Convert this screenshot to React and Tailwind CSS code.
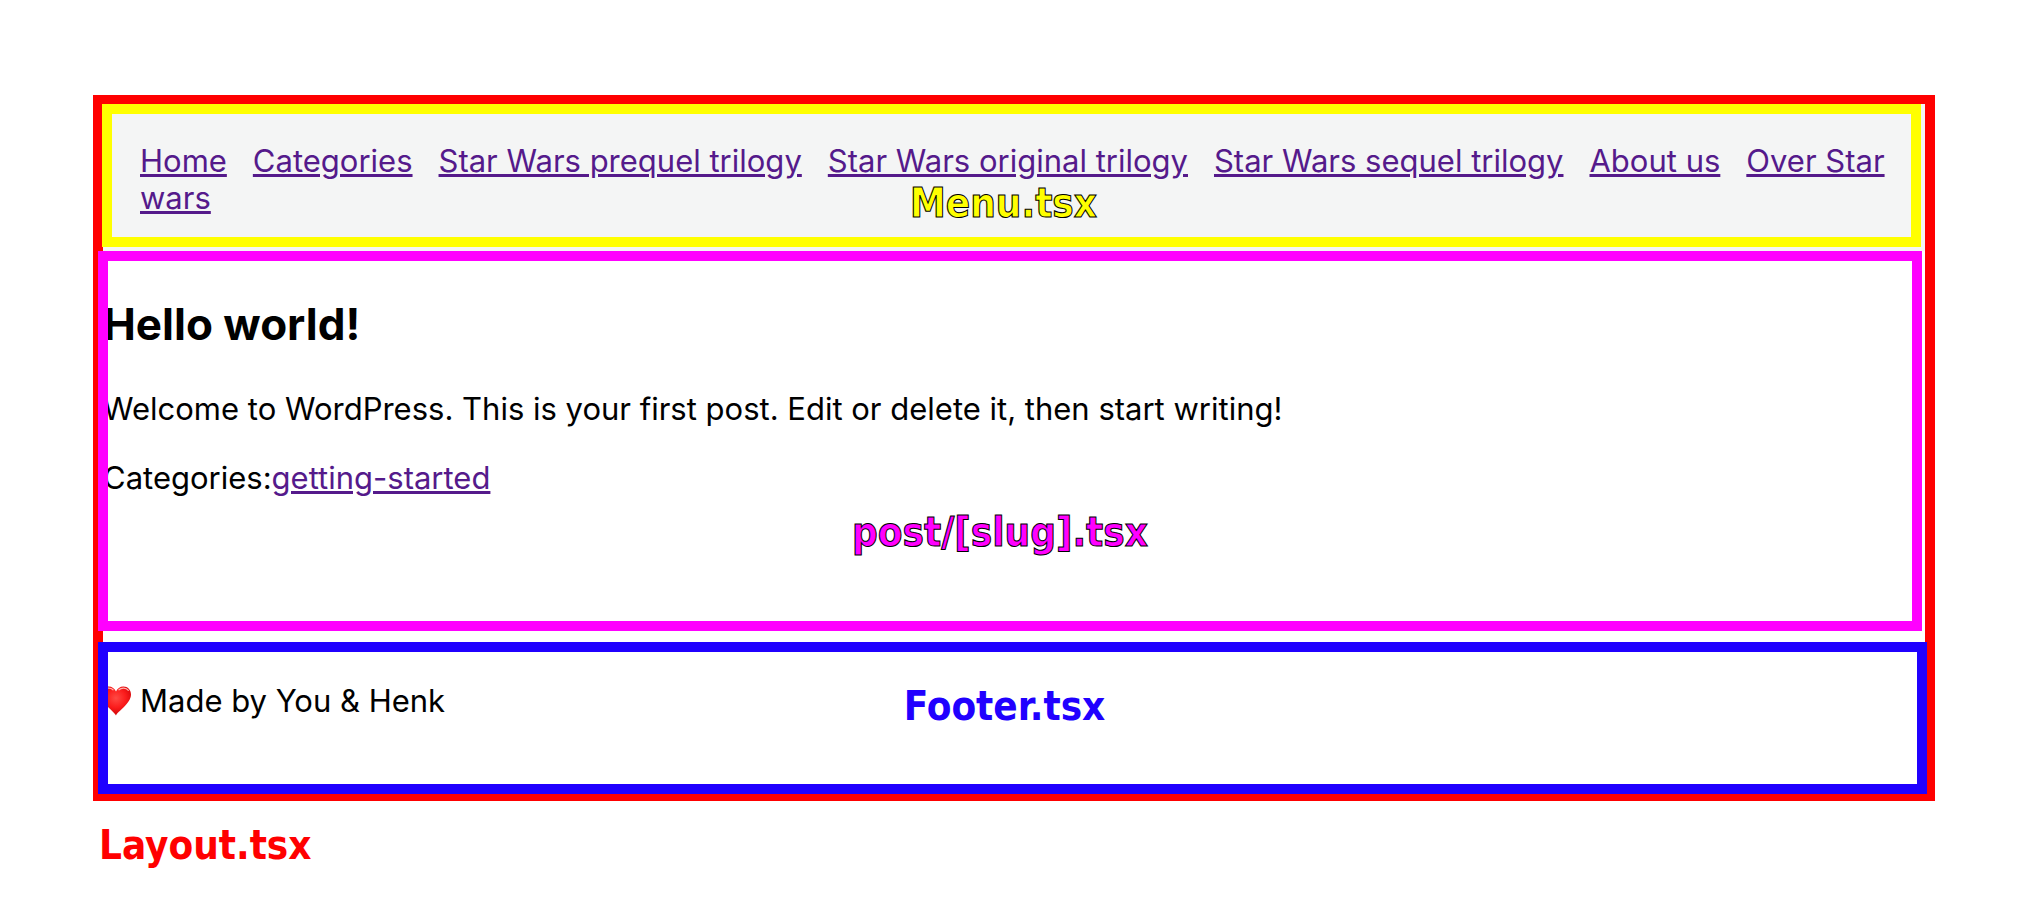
const menuItems = [
  "Home",
  "Categories",
  "Star Wars prequel trilogy",
  "Star Wars original trilogy",
  "Star Wars sequel trilogy",
  "About us",
  "Over Star wars",
];

const label =
  "font-['DejaVu_Sans_Condensed','DejaVu_Sans',sans-serif] text-[40px] leading-[48px] font-bold";

const link =
  "text-[#551a8b] underline decoration-[3px] underline-offset-2";

function Menu() {
  return (
    <header className="bg-[#f4f5f5] pb-1">
      <nav className="relative -mt-px -ml-px mr-1 border-10 border-[#ffff00] pt-7 pr-3 pb-[21px] pl-7">
        {menuItems.map((item) => (
          <a key={item} href="#" className={`${link} mr-[26px] last-of-type:mr-0`}>
            {item}
          </a>
        ))}
        <div
          className={`${label} absolute inset-x-0 bottom-[10px] pr-4 text-center text-[#ffff00] [-webkit-text-stroke:1px_black]`}
        >
          Menu.tsx
        </div>
      </nav>
    </header>
  );
}

function Post() {
  return (
    <main className="-ml-[5px] mr-[3px] overflow-hidden border-10 border-[#ff00ff] pt-[35px] pb-[65px]">
      <div className="-ml-[5px]">
        <h1 className="text-[44px] leading-[56px] font-bold">Hello world!</h1>
        <p className="mt-[38px]">
          Welcome to WordPress. This is your first post. Edit or delete it, then
          start writing!
        </p>
        <p className="mt-8">
          Categories:
          <a href="#" className={link}>
            getting-started
          </a>
        </p>
      </div>
      <div
        className={`${label} mt-3 pr-5 text-center text-[#ff00ff] [-webkit-text-stroke:1px_black]`}
      >
        post/[slug].tsx
      </div>
    </main>
  );
}

function Heart() {
  return (
    <svg
      viewBox="0 0 32 32"
      className="mr-2 h-8 w-8 shrink-0"
      role="img"
      aria-label="heart"
    >
      <defs>
        <radialGradient id="heart" cx="0.5" cy="0.4" r="0.6">
          <stop offset="0" stopColor="#ff4a44" />
          <stop offset="0.55" stopColor="#fb1c1c" />
          <stop offset="1" stopColor="#cf0408" />
        </radialGradient>
      </defs>
      <path
        d="M16 30.500C14.500 26.500 1 18.500 1 9.500C1 5 4.300 1.500 8.500 1.500C12 1.500 14.800 3.500 16 6.500C17.200 3.500 20 1.500 23.500 1.500C27.700 1.500 31 5 31 9.500C31 18.500 17.500 26.500 16 30.500Z"
        fill="url(#heart)"
      />
      <path
        d="M19 4.800C21.500 2.400 26 2.500 28.300 5.300M4 5.300C6 2.700 10.500 2.400 13 4.800"
        fill="none"
        stroke="#ffb3ae"
        strokeWidth="1.200"
        strokeLinecap="round"
      />
    </svg>
  );
}

function Footer() {
  return (
    <footer className="relative -mr-[2px] -mb-[3px] -ml-[5px] mt-[11px] overflow-hidden border-10 border-[#2000ff] pt-[30px] pb-[65px]">
      <p className="-ml-2 flex items-center">
        <Heart />
        Made by You &amp; Henk
      </p>
      <div
        className={`${label} absolute inset-x-0 top-[30px] pr-4 text-center text-[#2000ff]`}
      >
        Footer.tsx
      </div>
    </footer>
  );
}

export default function App() {
  return (
    <div className="min-h-screen bg-white px-[93px] pt-[95px] font-['Inter',sans-serif] text-[31px] leading-[37px] text-black">
      <div className="mr-0.5 border-10 border-[#ff0000]">
        <Menu />
        <Post />
        <Footer />
      </div>
      <div className={`${label} mt-5 pl-1.5 text-[#ff0000]`}>Layout.tsx</div>
    </div>
  );
}
